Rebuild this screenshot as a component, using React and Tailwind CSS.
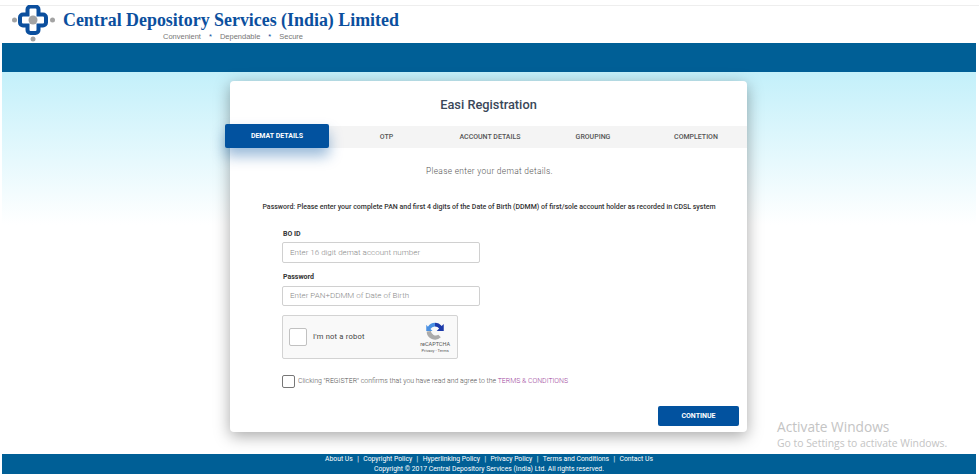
const steps = ['OTP', 'ACCOUNT DETAILS', 'GROUPING', 'COMPLETION'];
const links = ['About Us', 'Copyright Policy', 'Hyperlinking Policy', 'Privacy Policy', 'Terms and Conditions', 'Contact Us'];

function Logo() {
  return (
    <svg width="44" height="37" viewBox="12 5 44 37" className="shrink-0">
      <circle cx="33" cy="20" r="4.5" fill="#a3a3a3" />
      <circle cx="14.5" cy="20" r="2.5" fill="#a3a3a3" />
      <circle cx="52.5" cy="20" r="2.5" fill="#a3a3a3" />
      <circle cx="33" cy="39" r="2.5" fill="#a3a3a3" />
      <path
        d="M27.5 14.5V9.500a3 3 0 0 1 3-3h5a3 3 0 0 1 3 3v5h4.500a3 3 0 0 1 3 3v5a3 3 0 0 1-3 3H38.500V30a3 3 0 0 1-3 3h-5a3 3 0 0 1-3-3V25.500H23a3 3 0 0 1-3-3v-5a3 3 0 0 1 3-3z"
        fill="none"
        stroke="#0b4f9e"
        strokeWidth="4"
      />
    </svg>
  );
}

function Recaptcha() {
  return (
    <svg width="20" height="20" viewBox="0 0 24 24" fill="none">
      <path d="M12 2a10 10 0 0 1 8 4l2.500-2.500V12H14l3-3a6 6 0 0 0-5-2.500z" fill="#1c3aa9" />
      <path d="M12 2A10 10 0 0 0 3.500 7L1.500 4.500V12H9L6.500 9.500A6 6 0 0 1 12 6.500z" fill="#4a90e2" />
      <path d="M2 12.500a10 10 0 0 0 17 7l-3-3a6 6 0 0 1-9-4.500z" fill="#ababab" />
    </svg>
  );
}

export default function App() {
  return (
    <div className="w-[979px] h-[476px] overflow-hidden bg-white flex flex-col pb-[2px] font-['Roboto',sans-serif]">
      {/* Header */}
      <div className="h-[38px] mt-[5px] pl-[12px] border-t border-[#eeeeee] flex items-start shrink-0">
        <div className="mt-[-1px]">
          <Logo />
        </div>
        <div className="ml-[7px] flex flex-col">
          <div className="font-['Liberation_Serif',serif] font-bold text-[17.9px] leading-[22px] mt-[3px] text-[#0b4f9e] whitespace-nowrap">
            Central Depository Services (India) Limited
          </div>
          <div className="ml-[100px] mt-[1px] text-[7.5px] leading-[9px] text-[#777777] flex gap-[8px] font-['Liberation_Sans',sans-serif]">
            <span>Convenient</span>
            <span className="text-[#0b4f9e]">*</span>
            <span>Dependable</span>
            <span className="text-[#0b4f9e]">*</span>
            <span>Secure</span>
          </div>
        </div>
      </div>

      {/* Blue bar */}
      <div className="h-[29px] ml-[2px] mr-[3px] bg-[#005f96] shrink-0" />

      {/* Main */}
      <div className="flex-1 ml-[2px] mr-[3px] relative bg-gradient-to-b from-[#c3f0fa] to-white to-40% flex pt-[9px]">
        <div className="w-[517px] h-[351px] ml-[228px] bg-white rounded-[4px] shadow-[0_4px_16px_rgba(0,0,0,0.35)] flex flex-col relative">
          <div className="text-center text-[#3a4759] font-medium text-[12.8px] leading-[18px] mt-[15px]">
            Easi Registration
          </div>

          {/* Steps */}
          <div className="mt-[12px] h-[22px] bg-[#f4f4f4] relative flex items-center pl-[100px]">
            <div className="absolute left-[-5px] top-[-2px] w-[104px] h-[24px] bg-[#02529f] rounded-[2px] shadow-[0_8px_14px_rgba(2,82,159,0.4)] flex items-center justify-center text-white font-bold text-[7px]">
              DEMAT DETAILS
            </div>
            {steps.map((s, i) => (
              <div key={s} className={`text-center text-[7px] font-medium text-[#555555] ${i === 0 ? 'w-[113px]' : i === 1 ? 'w-[94px]' : i === 2 ? 'w-[112px]' : 'w-[94px]'}`}>
                {s}
              </div>
            ))}
          </div>

          <div className="text-center text-[8.4px] font-light tracking-[0.3px] text-[#555555] mt-[17px] ml-[2px] leading-[12px]">
            Please enter your demat details.
          </div>
          <div className="text-center text-[7px] font-medium text-[#333333] mt-[25px] leading-[10px] ml-[1px]">
            Password: Please enter your complete PAN and first 4 digits of the Date of Birth (DDMM) of first/sole account holder as recorded in CDSL system
          </div>

          {/* Form */}
          <div className="ml-[52px] mt-[17px] flex flex-col">
            <label className="ml-[1px] text-[7px] font-bold text-[#333333] leading-[10px]">BO ID</label>
            <div className="mt-[3px] w-[198px] h-[21px] border border-[#d0d0d0] rounded-[2px] flex items-center pl-[7px] text-[8px] font-light text-[#888888]">
              Enter 16 digit demat account number
            </div>
            <label className="ml-[1px] mt-[9px] text-[7px] font-bold text-[#333333] leading-[10px]">Password</label>
            <div className="mt-[4px] w-[198px] h-[20px] border border-[#d0d0d0] rounded-[2px] flex items-center pl-[7px] text-[8px] font-light text-[#888888]">
              Enter PAN+DDMM of Date of Birth
            </div>

            {/* reCAPTCHA */}
            <div className="mt-[9px] w-[176px] h-[44px] bg-[#f9f9f9] border border-[#d3d3d3] rounded-[2px] flex items-center pl-[6px]">
              <div className="w-[18px] h-[18px] bg-white border border-[#c1c1c1] rounded-[2px]" />
              <span className="ml-[6px] text-[7.6px] text-[#444444] tracking-[0.2px]">I'm not a robot</span>
              <div className="ml-auto mr-[7px] flex flex-col items-center">
                <Recaptcha />
                <span className="text-[5.5px] leading-[7px] text-[#555555]">reCAPTCHA</span>
                <span className="text-[4px] leading-[5px] text-[#555555]">Privacy - Terms</span>
              </div>
            </div>

            <div className="mt-[16px] flex items-center">
              <div className="w-[13px] h-[13px] border border-[#777777] rounded-[2px] bg-white" />
              <span className="ml-[3px] text-[6.95px] font-light text-[#555555] whitespace-nowrap">
                Clicking "REGISTER" confirms that you have read and agree to the <span className="text-[#9c3f9c]">TERMS &amp; CONDITIONS</span>
              </span>
            </div>
          </div>

          <div className="absolute right-[8px] bottom-[6px] w-[81px] h-[20px] bg-[#02529f] rounded-[2px] flex items-center justify-center text-white font-bold text-[7px]">
            CONTINUE
          </div>
        </div>

        {/* Windows watermark */}
        <div className="absolute left-[775px] top-[347px] text-[#c4c4c4] font-['Open_Sans',sans-serif] pointer-events-none">
          <div className="text-[13.7px] leading-[16px]">Activate Windows</div>
          <div className="text-[10.4px] leading-[14px] mt-[1px] whitespace-nowrap">Go to Settings to activate Windows.</div>
        </div>
      </div>

      {/* Footer */}
      <div className="h-[20px] ml-[2px] mr-[3px] bg-[#005f96] shrink-0 text-white text-[6.8px] flex flex-col items-center">
        <div className="flex gap-[4.4px] leading-[10px]">
          {links.map((l, i) => (
            <span key={l} className="flex gap-[4.4px]">
              {i > 0 && <span>|</span>}
              {l}
            </span>
          ))}
        </div>
        <div className="leading-[10px]">Copyright © 2017 Central Depository Services (India) Ltd. All rights reserved.</div>
      </div>
    </div>
  );
}
